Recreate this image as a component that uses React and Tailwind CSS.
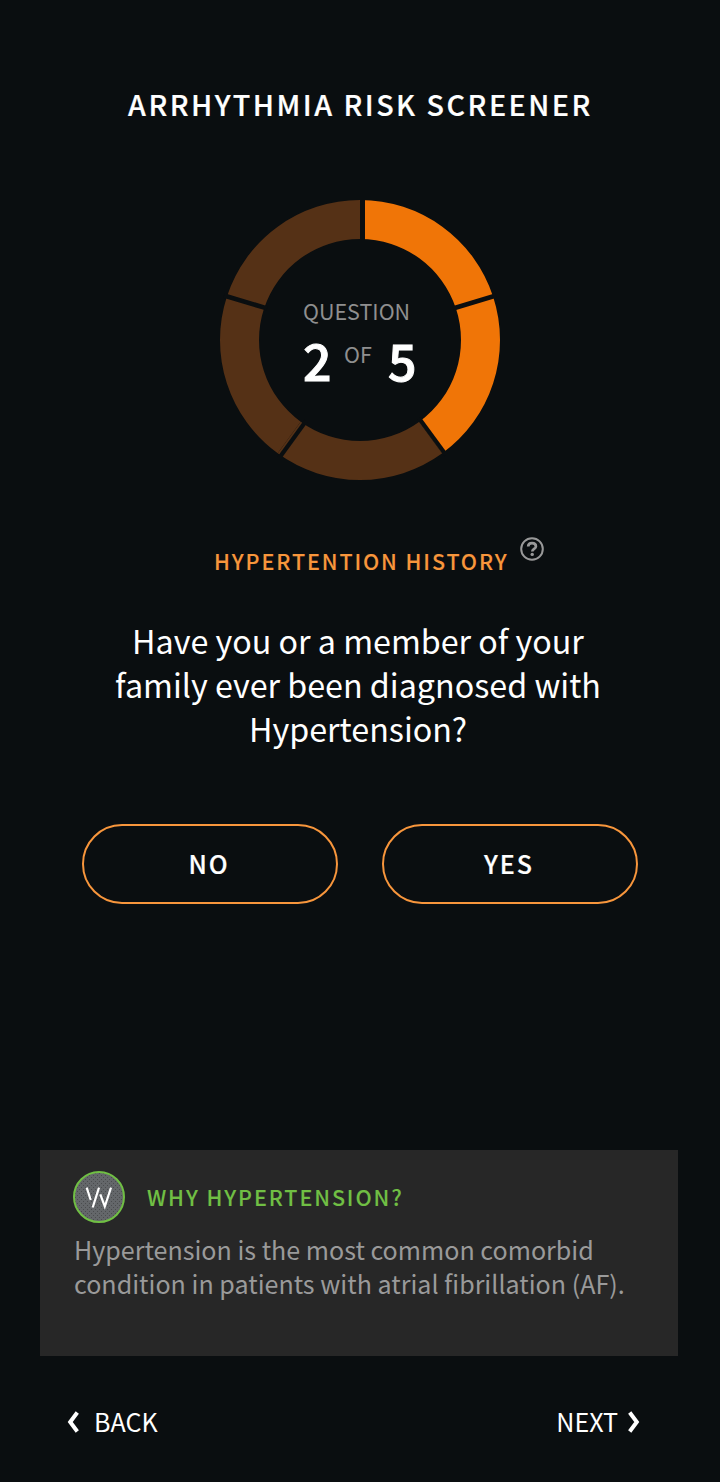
import React from 'react';

const TOTAL = 5;
const CURRENT = 2;

// [x1, y1, x2, y2, width] of the gaps between segments
const GAPS = [
  [142.5, -2, 142.5, 42, 5],
  [276, 95.5, 233, 108.5, 4.6],
  [226, 255, 199, 218.3, 4.2],
  [59, 258.3, 86, 221, 4.2],
  [4, 95.5, 47, 108.4, 4.6],
];

const point = (radius, deg) => {
  const rad = ((deg - 90) * Math.PI) / 180;
  return `${140 + radius * Math.cos(rad)} ${140 + radius * Math.sin(rad)}`;
};

const segmentPath = (index) => {
  const start = (index * 360) / TOTAL;
  const end = start + 360 / TOTAL;
  return `M${point(140, start)} A140 140 0 0 1 ${point(140, end)} L${point(101, end)} A101 101 0 0 0 ${point(101, start)} Z`;
};

const ProgressRing = () => (
  <div className="grid w-[280px] h-[280px]">
    <svg viewBox="0 0 280 280" className="col-start-1 row-start-1 w-full h-full">
      {Array.from({ length: TOTAL }, (_, i) => (
        <path key={i} d={segmentPath(i)} fill={i < CURRENT ? '#f07507' : '#553116'} />
      ))}
      {GAPS.map(([x1, y1, x2, y2, width]) => (
        <line key={x1} x1={x1} y1={y1} x2={x2} y2={y2} stroke="#0a0e10" strokeWidth={width} />
      ))}
    </svg>
    <div className="col-start-1 row-start-1 pl-[83px] pt-[95px] text-[#8f8f8f]">
      <p className="text-[21.5px] leading-8">QUESTION</p>
      <div className="flex items-start leading-[64px]">
        <span className="w-[41px] text-[50px] font-medium text-white [-webkit-text-stroke:1px]">{CURRENT}</span>
        <span className="w-[44px] text-[21.5px] leading-[54px]">OF</span>
        <span className="text-[50px] font-medium text-white [-webkit-text-stroke:1px]">{TOTAL}</span>
      </div>
    </div>
  </div>
);

const HelpIcon = () => (
  <svg viewBox="0 0 24 24" className="w-6 h-6 mt-px" fill="none" stroke="#999">
    <circle cx="12" cy="12" r="10.8" strokeWidth="2" />
    <path d="M8.2 9.6C8.2 7.500 9.800 6.200 12 6.200s3.900 1.200 3.900 3.200c0 2.500-3.600 2.600-3.600 5.200" strokeWidth="2.700" />
    <circle cx="12.200" cy="17.400" r="1.700" fill="#999" stroke="none" />
  </svg>
);

const Chevron = ({ className }) => (
  <svg viewBox="0 0 12 22" className={className} fill="none" stroke="#fff" strokeWidth="4">
    <path d="M10.300 1.500L3.200 11l7.100 9.500" />
  </svg>
);

const AnswerButton = ({ children }) => (
  <button className="w-64 h-20 pr-[2px] rounded-full border-2 border-[#f8963c] text-[25px] font-medium tracking-[2px] text-white [-webkit-text-stroke:0.2px]">
    {children}
  </button>
);

const App = () => {
  return (
    <div className="flex flex-col items-center w-[720px] h-[1482px] bg-[#0a0e10] text-white font-['Noto_Sans_CJK_SC',sans-serif]">
      <h1 className="mt-[80px] h-12 pl-px text-[28.7px] leading-[48px] font-medium tracking-[2.5px] whitespace-nowrap [-webkit-text-stroke:0.2px]">
        ARRHYTHMIA RISK SCREENER
      </h1>

      <div className="mt-[72px]">
        <ProgressRing />
      </div>

      {/* Topic */}
      <div className="flex w-full mt-[56px] pl-[214px] h-11">
        <h2 className="w-[306px] text-[21.5px] leading-[50px] font-medium tracking-[1.9px] text-[#f8963c] whitespace-nowrap [-webkit-text-stroke:0.1px]">HYPERTENTION HISTORY</h2>
        <HelpIcon />
      </div>

      <p className="mt-[38px] h-[134px] mr-[4px] text-[32.25px] leading-[44px] text-center whitespace-nowrap">
        Have you or a member of your<br />
        family ever been diagnosed with<br />
        Hypertension?
      </p>

      <div className="flex gap-11 mt-[72px]">
        <AnswerButton>NO</AnswerButton>
        <AnswerButton>YES</AnswerButton>
      </div>

      {/* Explanation card */}
      <section className="mt-[246px] w-[638px] h-[206px] mr-[2px] pl-[34px] pt-[21px] bg-[#272727]">
        <div className="flex items-center gap-[22px] h-[52px]">
          <svg viewBox="0 0 52 52" className="w-[52px] h-[52px] -ml-px">
            <defs>
              <pattern id="dots" width="4" height="4" patternUnits="userSpaceOnUse">
                <rect width="1" height="1" fill="#4a4c4e" />
                <rect x="2" y="2" width="1" height="1" fill="#4a4c4e" />
              </pattern>
            </defs>
            <circle cx="26" cy="26" r="25" fill="#64676a" />
            <circle cx="26" cy="26" r="25" fill="url(#dots)" stroke="#70bf44" strokeWidth="2" />
            <path d="M13.700 16.700l4 12.300M26 16.700l-6.300 19.800M27.300 23.300l4.500 12.200L38 16.700" fill="none" stroke="#fff" strokeWidth="2.200" />
          </svg>
          <h3 className="text-[21.5px] font-medium tracking-[1.9px] text-[#70bf44] [-webkit-text-stroke:0.1px]">WHY HYPERTENSION?</h3>
        </div>
        <p className="mt-[9px] text-[25.07px] leading-[34px] text-[#9a9a9a] whitespace-nowrap">
          Hypertension is the most common comorbid<br />
          condition in patients with atrial fibrillation (AF).
        </p>
      </section>

      <nav className="flex justify-between w-full mt-[45px] pl-[67px] pr-20 text-[25.07px] leading-10">
        <button className="flex items-center gap-[15px]">
          <Chevron className="w-3 h-[22px] mt-px" />
          BACK
        </button>
        <button className="flex items-center gap-[10px]">
          NEXT
          <Chevron className="w-3 h-[22px] mt-px rotate-180" />
        </button>
      </nav>
    </div>
  );
};

export default App;
